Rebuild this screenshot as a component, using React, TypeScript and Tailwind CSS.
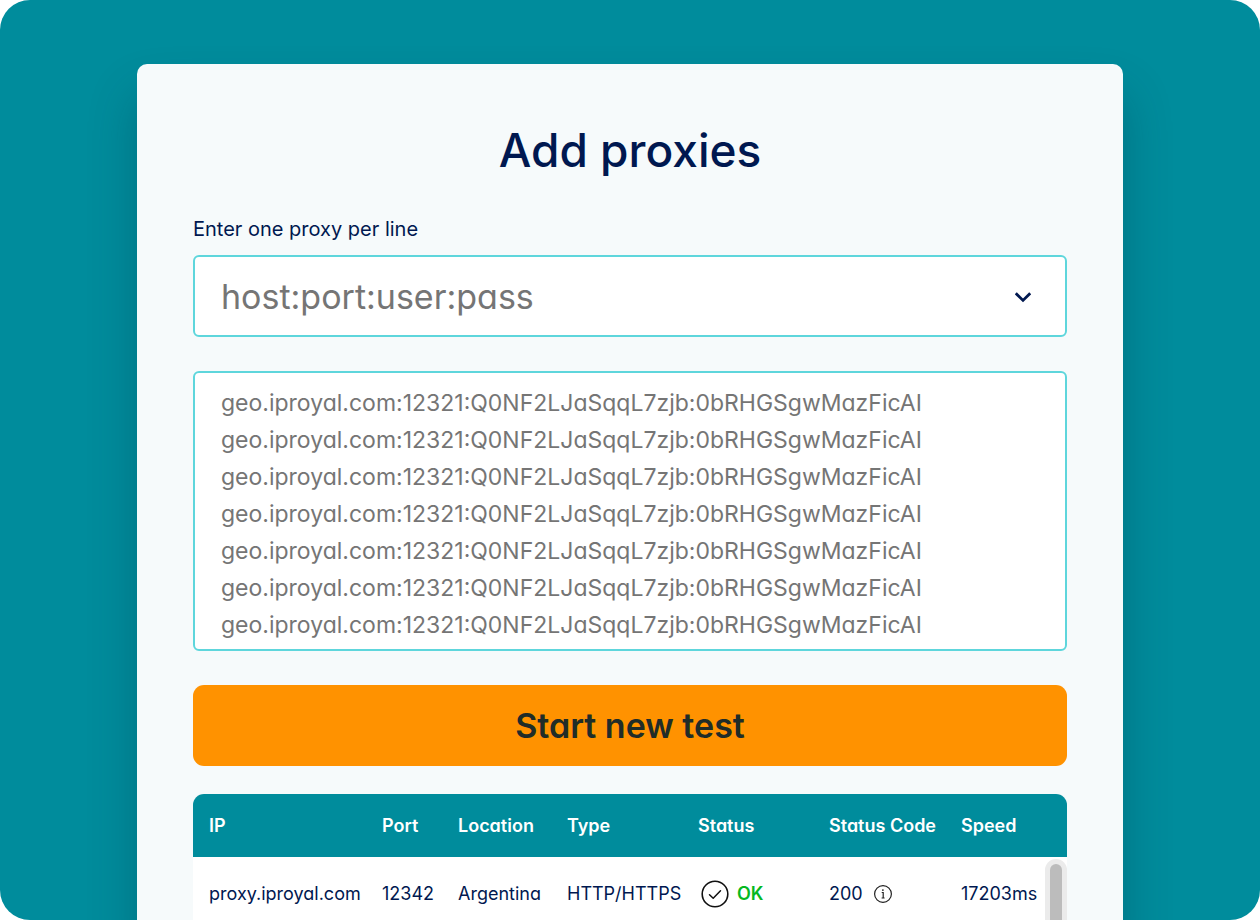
import React, { useState } from 'react';

interface ProxyResult {
  ip: string;
  port: string;
  location: string;
  type: string;
  status: string;
  statusCode: number;
  speed: string;
}

const FORMATS = ['host:port:user:pass'];

const INITIAL_PROXIES = Array(7)
  .fill('geo.iproyal.com:12321:Q0NF2LJaSqqL7zjb:0bRHGSgwMazFicAI')
  .join('\n');

const RESULTS: ProxyResult[] = [
  {
    ip: 'proxy.iproyal.com',
    port: '12342',
    location: 'Argentina',
    type: 'HTTP/HTTPS',
    status: 'OK',
    statusCode: 200,
    speed: '17203ms'
  }
];

const COLUMNS = [
  { label: 'IP', width: 'w-[173px]' },
  { label: 'Port', width: 'w-[76px]' },
  { label: 'Location', width: 'w-[109px]' },
  { label: 'Type', width: 'w-[131px]' },
  { label: 'Status', width: 'w-[131px]' },
  { label: 'Status Code', width: 'w-[132px]' },
  { label: 'Speed', width: 'w-[122px]' }
];

const ChevronIcon = () => (
  <svg
    className="pointer-events-none absolute right-9 top-8 size-4"
    viewBox="0 0 16 16"
    fill="none"
    stroke="#001850"
    strokeWidth="2.8"
    aria-hidden="true"
  >
    <path d="M0.8 6.3 8 13.4l7.2-7.1" />
  </svg>
);

const CheckIcon = () => (
  <svg className="size-7 shrink-0" viewBox="0 0 28 28" fill="none" stroke="#111111" aria-hidden="true">
    <circle cx="14" cy="14" r="12.8" strokeWidth="1.6" />
    <path d="m8.5 14.7 3.7 3.6 7.3-7.5" strokeWidth="1.5" strokeLinecap="round" strokeLinejoin="round" />
  </svg>
);

const InfoIcon = () => (
  <svg className="size-5 shrink-0" viewBox="0 0 20 20" fill="none" stroke="#222222" aria-hidden="true">
    <circle cx="10" cy="10" r="8.4" strokeWidth="1.2" />
    <path d="M8.7 8.5h1.5V14M8.6 14h3" strokeWidth="1.2" />
    <circle cx="9.9" cy="6.1" r="0.9" fill="#222222" stroke="none" />
  </svg>
);

const ResultsTable: React.FC<{ results: ProxyResult[] }> = ({ results }) => (
  <div className="relative mt-7 overflow-hidden rounded-t-[11px] bg-white">
    <table className="w-full table-fixed border-collapse text-left text-[18px] leading-6 text-[#001850]">
      <thead className="bg-[#008c9c] text-white">
        <tr className="h-[63px]">
          {COLUMNS.map(({ label, width }) => (
            <th key={label} scope="col" className={`${width} whitespace-nowrap pl-4 font-semibold`}>
              {label}
            </th>
          ))}
        </tr>
      </thead>
      <tbody>
        {results.map((result) => (
          <tr key={`${result.ip}:${result.port}`} className="h-[74px] whitespace-nowrap">
            <td className="pl-4">{result.ip}</td>
            <td className="pl-4">{result.port}</td>
            <td className="pl-4">{result.location}</td>
            <td className="pl-4">{result.type}</td>
            <td className="pl-4">
              <span className="flex items-center gap-2 pl-[3px] font-semibold text-[#06b81f]">
                <CheckIcon />
                {result.status}
              </span>
            </td>
            <td className="pl-4">
              <span className="flex items-center gap-2.5">
                {result.statusCode}
                <InfoIcon />
              </span>
            </td>
            <td className="pl-4">{result.speed}</td>
          </tr>
        ))}
      </tbody>
    </table>

    {/* Scrollbar */}
    <div className="absolute bottom-0 right-0 top-[65px] w-[22px] rounded-t-full bg-[#ebebeb] px-[5px] pt-[5px]">
      <div className="h-full rounded-t-full bg-[#bcbcbc]" />
    </div>
  </div>
);

const App: React.FC = () => {
  const [format, setFormat] = useState(FORMATS[0]);
  const [proxies, setProxies] = useState(INITIAL_PROXIES);

  return (
    <div className="h-screen overflow-hidden rounded-[30px] bg-[#008c9c] px-[137px] pt-16 font-['Inter',sans-serif] [font-feature-settings:'cv11']">
      <main className="rounded-t-[10px] bg-[#f6fafb] px-14 pt-14 shadow-[0_32px_48px_rgba(0,50,65,0.3)]">
        <h1 className="text-center text-[46px] font-medium leading-[60px] text-[#001850]">Add proxies</h1>

        <form onSubmit={(event) => event.preventDefault()}>
          {/* Proxy format */}
          <label htmlFor="proxies" className="mt-[35px] block text-[20px] leading-7 text-[#001850]">
            Enter one proxy per line
          </label>
          <div className="relative mt-3">
            <select
              aria-label="Proxy format"
              value={format}
              onChange={(event) => setFormat(event.target.value)}
              className="block h-[82px] w-full appearance-none rounded-md border-2 border-[#5ed6dc] bg-white px-[26px] text-[34px] text-[#757575]"
            >
              {FORMATS.map((option) => (
                <option key={option}>{option}</option>
              ))}
            </select>
            <ChevronIcon />
          </div>

          {/* Proxy list */}
          <textarea
            id="proxies"
            value={proxies}
            onChange={(event) => setProxies(event.target.value)}
            spellCheck={false}
            className="mt-[34px] block h-[280px] w-full resize-none overflow-hidden rounded-md border-2 border-[#5ed6dc] bg-white px-[26px] py-3 text-[23px] leading-[37px] text-[#757575]"
          />

          <button
            type="submit"
            className="mt-[34px] block h-[81px] w-full rounded-[11px] bg-[#ff9200] text-[34px] font-semibold text-[#202c28]"
          >
            Start new test
          </button>
        </form>

        <ResultsTable results={RESULTS} />
      </main>
    </div>
  );
};

export default App;
